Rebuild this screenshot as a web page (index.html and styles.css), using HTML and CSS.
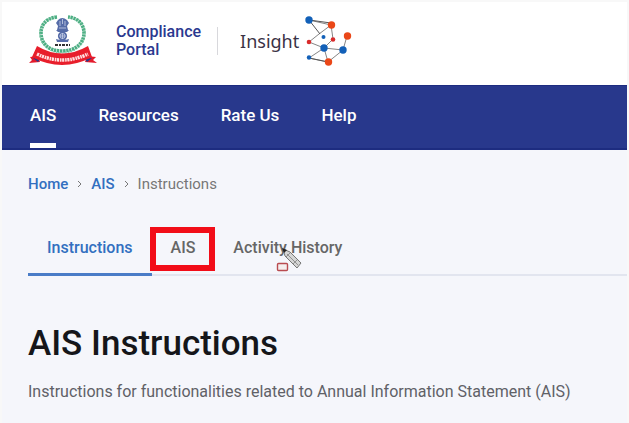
FILE: index.html
```html
<!DOCTYPE html>
<html lang="en">
<head>
<meta charset="utf-8">
<meta name="viewport" content="width=device-width, initial-scale=1">
<title>Compliance Portal</title>
<link rel="stylesheet" href="styles.css">
</head>
<body>
<div class="page">
  <header class="brand">
    <svg class="emblem" width="70" height="52" viewBox="28 15 70 52" aria-hidden="true">
      <g fill="none" stroke="#4cae83">
        <path d="M57 17C46 18 41 25 41 33C41 43 48 51 62 51C76 51 84 43 84 33C84 25 79 18 68 17" stroke-width="3.6" stroke-dasharray="2.4 .6"/>
        <path d="M55 17C43 20 40 27 40 34C40 45 49 53 62 53C76 53 85 45 85 34C85 27 81 20 70 17" stroke="#83c9a7" stroke-width="1" stroke-dasharray="1.5 1.5"/>
      </g>
      <g fill="#566ca8">
        <path d="M58 20Q62 16 67 20L69 23L67 26L68 30H57L58 26L56 23Z"/>
        <path d="M56 30H69L67 32H58Z"/>
        <circle cx="62.5" cy="36" r="4.6"/>
        <path d="M56 39L60 40H65L69 39L68 42H57Z"/>
      </g>
      <g fill="none" stroke="#c9d2e8" stroke-width=".8">
        <path d="M60 21V26M65 21V26M59 28H66M62.500 19V24"/>
        <circle cx="62.500" cy="36" r="2.500"/>
        <path d="M62.500 33V39M59.500 36H65.500"/>
      </g>
      <path d="M55 45H70" stroke="#333" stroke-width="2" stroke-dasharray="3 1 2 1"/>
      <path d="M30 57L38 56L40 62L29 63L32 60ZM96 57L87 56L85 62L97 63L93 60Z" fill="#e31b2c"/>
      <path d="M33 58L40 59L38 62ZM92 58L85 59L87 62Z" fill="#263a8b"/>
      <path d="M37 46Q62 61 88 46L92 57Q62 73 32 57Z" fill="#e81e2b"/>
      <path d="M37 54Q62 66 88 54" fill="none" stroke="#ffe1e1" stroke-width="3.500" stroke-dasharray="2.200 .8 1.600 .6"/>
    </svg>
    <a class="brand-name" href="#">Compliance<br>Portal</a>
    <span class="divider"></span>
    <a class="insight" href="#">Insight</a>
    <svg class="network" width="48" height="52" viewBox="300 14 48 52" aria-hidden="true">
      <g fill="none" stroke="#858585" stroke-width="1">
        <path d="M305 19L327 24L315 33L305 41L320 47L329 38L327 24M320 47L339 49L343 35M320 47L305 57L324 61L320 47M324 61L339 49"/>
        <path d="M327 22L305 19L316 33" stroke="#555"/>
        <path d="M305 57L324 61" stroke="#555"/>
      </g>
      <g fill="#1260b8">
        <circle cx="305" cy="19" r="3.700"/><circle cx="319.500" cy="36" r="2"/>
        <circle cx="320" cy="47" r="3.700"/><circle cx="339" cy="49" r="3.700"/>
        <circle cx="305" cy="56.500" r="2.200"/>
      </g>
      <g fill="#ea4718">
        <circle cx="327.500" cy="24" r="3.700"/><circle cx="343.500" cy="35" r="3.700"/>
        <circle cx="324.500" cy="61" r="3.700"/>
      </g>
      <g fill="#d92b2b"><circle cx="305" cy="41" r="2.300"/><circle cx="329" cy="38.500" r="2.300"/></g>
    </svg>
  </header>
  <nav class="main-nav" aria-label="Main">
    <a class="active" href="#">AIS</a>
    <a href="#">Resources</a>
    <a href="#">Rate Us</a>
    <a href="#">Help</a>
  </nav>
  <main>
    <nav class="crumbs" aria-label="Breadcrumb">
      <a href="#">Home</a>
      <svg width="5" height="8" viewBox="0 0 5 8" aria-hidden="true"><path d="M1 1L4 4L1 7"/></svg>
      <a href="#">AIS</a>
      <svg width="5" height="8" viewBox="0 0 5 8" aria-hidden="true"><path d="M1 1L4 4L1 7"/></svg>
      <span>Instructions</span>
    </nav>
    <div class="tabs" role="tablist">
      <button class="tab selected" role="tab" aria-selected="true">Instructions</button>
      <button class="tab marked" role="tab" aria-selected="false">AIS</button>
      <button class="tab" role="tab" aria-selected="false">Activity History
        <svg class="pencil" width="28" height="26" viewBox="280 245 28 26" aria-hidden="true">
          <path d="M288 247L295 250L306 261L302 266L290 254Z" fill="#d5d5d5" stroke="#777"/>
          <path d="M292 252L303 263M295 251L291 255M302 258L298 262" fill="none" stroke="#929292"/>
          <path d="M287 246L292 248L289 251Z" fill="#222"/>
          <rect x="282.500" y="261.500" width="10" height="7" rx="1" fill="#f5eeee" stroke="#b94b50" stroke-width="1.400"/>
        </svg>
      </button>
    </div>
    <h1>AIS Instructions</h1>
    <p>Instructions for functionalities related to Annual Information Statement (AIS)</p>
  </main>
</div>
</body>
</html>
```
FILE: styles.css
```css
* { box-sizing: border-box; }

body {
  margin: 0;
  padding: 2px;
  background: #f8f8f8;
  font-family: Roboto, "Liberation Sans", sans-serif;
}

a { text-decoration: none; }

.page {
  min-height: calc(100vh - 4px);
  background: #f5f6fb;
}

.brand {
  display: flex;
  align-items: center;
  height: 83px;
  padding: 0 26px 6px;
  background: #fff;
}

.brand-name {
  margin-left: 18px;
  color: #2b3990;
  font-size: 16px;
  font-weight: 500;
  line-height: 18px;
}

.divider {
  width: 1px;
  height: 28px;
  margin: 0 22px 0 16px;
  background: #d8d8dc;
}

.insight {
  color: #3b3346;
  font-family: "Noto Sans", sans-serif;
  font-size: 18px;
}

.network { margin-left: 5px; }

.main-nav {
  display: flex;
  gap: 42px;
  height: 65px;
  padding: 0 28px;
  border-top: 1px solid #1d2c80;
  border-bottom: 2px solid #1d2c80;
  background: #28388c;
}

.main-nav a {
  display: flex;
  align-items: center;
  border-bottom: 5px solid transparent;
  color: #fff;
  font-size: 17px;
  font-weight: 500;
}

.main-nav .active { border-bottom-color: #fff; }

main { padding: 24px 0 24px 26px; }

.crumbs {
  display: flex;
  align-items: center;
  gap: 9px;
  color: #777;
  font-size: 15px;
  line-height: 20px;
}

.crumbs a {
  color: #326fc0;
  font-weight: 500;
}

.crumbs svg {
  fill: none;
  stroke: #777;
}

.tabs {
  display: flex;
  height: 54px;
  margin-top: 28px;
  border-bottom: 2px solid #e2e5ef;
}

.tab {
  position: relative;
  height: 54px;
  padding: 0 19px;
  border: 0;
  border-bottom: 3px solid transparent;
  background: none;
  color: #666;
  font: 500 16px/20px Roboto, "Liberation Sans", sans-serif;
}

.selected {
  border-bottom-color: #4a7cc7;
  color: #326fc0;
}

.marked::after {
  content: "";
  position: absolute;
  inset: 5px -1px 2px -2px;
  border: 6px solid #f20d18;
}

.pencil {
  position: absolute;
  top: 25px;
  left: 61px;
}

h1 {
  margin: 48px 0 0;
  color: #15161a;
  font-size: 35px;
  font-weight: 500;
  line-height: 40px;
}

p {
  margin: 18px 0 0;
  color: #606167;
  font-size: 16px;
  line-height: 20px;
}
```
